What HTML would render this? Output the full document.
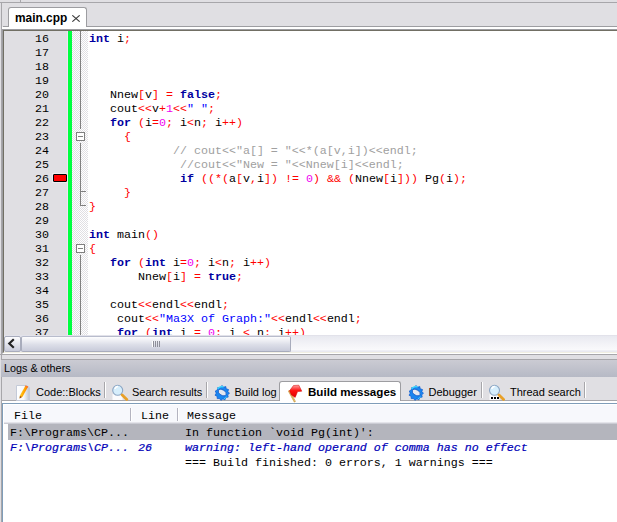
<!DOCTYPE html>
<html><head><meta charset="utf-8">
<style>
*{margin:0;padding:0;box-sizing:border-box}
html,body{width:617px;height:522px;overflow:hidden;background:#e0dfe3;position:relative}
.a{position:absolute}
.m{font-family:"Liberation Mono",monospace;font-size:11.67px;white-space:pre;line-height:14px}
.s{font-family:"Liberation Sans",sans-serif;font-size:11px;white-space:pre;color:#000}
.k{color:#0000a0;font-weight:bold}
.o{color:#ff0000}
.n{color:#f000f0}
.q{color:#0000ff}
.cl.c{color:#a0a0a0}
.ln{position:absolute;margin-top:1px;left:4px;width:45px;text-align:right;color:#000}
.cl{position:absolute;margin-top:1px;left:89px;color:#000}
.tl{position:absolute;top:386px;height:12px;font-family:"Liberation Sans",sans-serif;font-size:11px;line-height:12px;white-space:pre;color:#000}
.sep{position:absolute;top:382px;width:1px;height:16px;background:#a7a6aa;box-shadow:1px 0 0 #fff}
</style></head><body>

<!-- top strip -->
<div class="a" style="left:0;top:2px;width:617px;height:1px;background:#a7a6aa"></div>
<div class="a" style="left:20px;top:0;width:1px;height:2px;background:#a7a6aa"></div>

<!-- tab bar bottom line -->
<div class="a" style="left:3px;top:26px;width:614px;height:1px;background:#9d9da1"></div>
<div class="a" style="left:2px;top:27px;width:615px;height:2px;background:#fff"></div>
<!-- main.cpp tab -->
<div class="a" style="left:8px;top:7px;width:79px;height:20px;background:#fff;border:1px solid #9d9da1;border-bottom:none;border-radius:3px 3px 0 0"></div>
<div class="a s" style="left:15px;top:12px;font-weight:bold;font-size:11.9px;line-height:12px">main.cpp</div>
<svg class="a" style="left:72px;top:15px" width="8" height="7" viewBox="0 0 8 7"><path d="M0.3 0.3L7.7 6.7M7.7 0.3L0.3 6.7" stroke="#3a3a3a" stroke-width="1.1"/></svg>

<!-- editor frame -->
<div class="a" style="left:2px;top:29px;width:615px;height:325px;background:#fff;border-top:1px solid #9d9da1;border-left:1px solid #9d9da1;border-bottom:1px solid #fff"></div>
<div class="a" style="left:3px;top:30px;width:614px;height:323px;border-top:1px solid #716f64;border-left:1px solid #716f64;border-bottom:1px solid #f1efe2"></div>

<!-- gutter -->
<div class="a" style="left:4px;top:31px;width:63px;height:305px;background:#e0dfe3"></div>
<div class="a" style="left:67px;top:31px;width:1px;height:305px;background:#f2e2f2"></div>
<div class="a" style="left:68px;top:31px;width:4px;height:305px;background:#00ff40"></div>
<div class="a" style="left:72px;top:31px;width:16px;height:305px;background-color:#fff;background-image:conic-gradient(#e0dfe3 25%,#fff 0 50%,#e0dfe3 0 75%,#fff 0);background-size:2px 2px"></div>

<!-- fold lines -->
<div class="a" style="left:80px;top:31px;width:1px;height:98px;background:#808080"></div>
<div class="a" style="left:76px;top:132px;width:9px;height:9px;background:#fff;border:1px solid #808080"></div>
<div class="a" style="left:78px;top:136px;width:5px;height:1px;background:#808080"></div>
<div class="a" style="left:80px;top:143px;width:1px;height:63px;background:#808080"></div>
<div class="a" style="left:80px;top:191px;width:6px;height:1px;background:#808080"></div>
<div class="a" style="left:80px;top:205px;width:6px;height:1px;background:#808080"></div>
<div class="a" style="left:76px;top:244px;width:9px;height:9px;background:#fff;border:1px solid #808080"></div>
<div class="a" style="left:78px;top:248px;width:5px;height:1px;background:#808080"></div>
<div class="a" style="left:80px;top:255px;width:1px;height:81px;background:#808080"></div>

<!-- breakpoint / error marker -->
<div class="a" style="left:52px;top:173px;width:16px;height:10px;background:#ececf0"></div>
<div class="a" style="left:53px;top:174px;width:14px;height:8px;background:#ff0000;border:1px solid #000;border-radius:1px"></div>

<!-- line numbers -->
<div class="m">
<div class="ln" style="top:31px">16</div>
<div class="ln" style="top:45px">17</div>
<div class="ln" style="top:59px">18</div>
<div class="ln" style="top:73px">19</div>
<div class="ln" style="top:87px">20</div>
<div class="ln" style="top:101px">21</div>
<div class="ln" style="top:115px">22</div>
<div class="ln" style="top:129px">23</div>
<div class="ln" style="top:143px">24</div>
<div class="ln" style="top:157px">25</div>
<div class="ln" style="top:171px">26</div>
<div class="ln" style="top:185px">27</div>
<div class="ln" style="top:199px">28</div>
<div class="ln" style="top:213px">29</div>
<div class="ln" style="top:227px">30</div>
<div class="ln" style="top:241px">31</div>
<div class="ln" style="top:255px">32</div>
<div class="ln" style="top:269px">33</div>
<div class="ln" style="top:283px">34</div>
<div class="ln" style="top:297px">35</div>
<div class="ln" style="top:311px">36</div>
<div class="ln" style="top:325px">37</div>

<div class="cl" style="top:31px"><span class="k">int</span> i<span class="o">;</span></div>
<div class="cl" style="top:87px">   Nnew<span class="o">[</span>v<span class="o">]</span> <span class="o">=</span> <span class="k">false</span><span class="o">;</span></div>
<div class="cl" style="top:101px">   cout<span class="o">&lt;&lt;</span>v<span class="o">+</span><span class="n">1</span><span class="o">&lt;&lt;</span><span class="q">" "</span><span class="o">;</span></div>
<div class="cl" style="top:115px">   <span class="k">for</span> <span class="o">(</span>i<span class="o">=</span><span class="n">0</span><span class="o">;</span> i<span class="o">&lt;</span>n<span class="o">;</span> i<span class="o">++)</span></div>
<div class="cl" style="top:129px">     <span class="o">{</span></div>
<div class="cl c" style="top:143px">            // cout&lt;&lt;"a[] = "&lt;&lt;*(a[v,i])&lt;&lt;endl;</div>
<div class="cl c" style="top:157px">             //cout&lt;&lt;"New = "&lt;&lt;Nnew[i]&lt;&lt;endl;</div>
<div class="cl" style="top:171px">             <span class="k">if</span> <span class="o">((*(</span>a<span class="o">[</span>v<span class="o">,</span>i<span class="o">])</span> <span class="o">!=</span> <span class="n">0</span><span class="o">)</span> <span class="o">&amp;&amp;</span> <span class="o">(</span>Nnew<span class="o">[</span>i<span class="o">]))</span> Pg<span class="o">(</span>i<span class="o">);</span></div>
<div class="cl" style="top:185px">     <span class="o">}</span></div>
<div class="cl" style="top:199px"><span class="o">}</span></div>
<div class="cl" style="top:227px"><span class="k">int</span> main<span class="o">()</span></div>
<div class="cl" style="top:241px"><span class="o">{</span></div>
<div class="cl" style="top:255px">   <span class="k">for</span> <span class="o">(</span><span class="k">int</span> i<span class="o">=</span><span class="n">0</span><span class="o">;</span> i<span class="o">&lt;</span>n<span class="o">;</span> i<span class="o">++)</span></div>
<div class="cl" style="top:269px">       Nnew<span class="o">[</span>i<span class="o">]</span> <span class="o">=</span> <span class="k">true</span><span class="o">;</span></div>
<div class="cl" style="top:297px">   cout<span class="o">&lt;&lt;</span>endl<span class="o">&lt;&lt;</span>endl<span class="o">;</span></div>
<div class="cl" style="top:311px">    cout<span class="o">&lt;&lt;</span><span class="q">"Ma3X of Graph:"</span><span class="o">&lt;&lt;</span>endl<span class="o">&lt;&lt;</span>endl<span class="o">;</span></div>
<div class="cl" style="top:325px">    <span class="k">for</span> <span class="o">(</span><span class="k">int</span> i <span class="o">=</span> <span class="n">0</span><span class="o">;</span> i <span class="o">&lt;</span> n<span class="o">;</span> i<span class="o">++)</span></div>
</div>

<!-- horizontal scrollbar -->
<div class="a" style="left:4px;top:335px;width:613px;height:17px;background:linear-gradient(#e8e9f0,#f3f3f7 50%,#f9f9fb 85%,#e9e9f0 94%);border-top:1px solid #e2e2ea"></div>
<div class="a" style="left:4px;top:336px;width:17px;height:16px;border:1px solid #a8acbc;border-radius:2px;background:linear-gradient(#fdfdfe,#c8cbda)"></div>
<svg class="a" style="left:7px;top:338px" width="10" height="12" viewBox="0 0 10 12"><path d="M6.8 1.2L2.3 5.5L6.8 9.8" fill="none" stroke="#222" stroke-width="2.2"/></svg>
<div class="a" style="left:21px;top:336px;width:270px;height:16px;border:1px solid #a8acbc;border-top-color:#b8bccc;border-radius:2px;background:linear-gradient(#fdfdfe,#dcdee8 55%,#c8cbda)"></div>
<div class="a" style="left:153px;top:341px;width:1px;height:6px;background:#8e8f99;box-shadow:2px 0 0 #8e8f99,4px 0 0 #8e8f99,6px 0 0 #8e8f99,-1px 0 0 #fff"></div>

<!-- sash -->
<div class="a" style="left:0;top:354px;width:617px;height:1px;background:#a7a6aa"></div>
<div class="a" style="left:1px;top:3px;width:1px;height:519px;background:#a7a6aa"></div>

<!-- Logs & others header -->
<div class="a" style="left:1px;top:359px;width:616px;height:18px;border-top:1px solid #a7a6aa;background:linear-gradient(#cbcbd3,#b6b9c5)"></div>
<div class="a s" style="left:4px;top:362px;line-height:13px;font-size:10.8px">Logs &amp; others</div>

<!-- bottom tabs -->
<div class="a" style="left:2px;top:400px;width:615px;height:1px;background:#a7a6aa"></div>
<div class="a" style="left:2px;top:401px;width:615px;height:2px;background:#fff"></div>
<div class="sep" style="left:104px"></div>
<div class="sep" style="left:206px"></div>
<div class="sep" style="left:481px"></div>
<div class="sep" style="left:584px"></div>
<div class="a" style="left:279px;top:381px;width:122px;height:20px;background:#fff;border:1px solid #9d9da1;border-bottom:none;border-radius:3px 3px 0 0"></div>

<!-- tab icons -->
<svg class="a" style="left:16px;top:385px" width="14" height="16" viewBox="0 0 14 16">
 <defs><linearGradient id="pg" x1="0" x2="1"><stop offset="0" stop-color="#fff"/><stop offset="0.55" stop-color="#f6f8fb"/><stop offset="1" stop-color="#bcc2d0"/></linearGradient>
 <linearGradient id="pc" x1="0" y1="0.3" x2="1" y2="0.7"><stop offset="0" stop-color="#ffe040"/><stop offset="0.5" stop-color="#ffa800"/><stop offset="1" stop-color="#ff5000"/></linearGradient></defs>
 <path d="M0.5 0.5h10.5l2.5 2.5v12.5h-13z" fill="url(#pg)" stroke="#c4cad8"/>
 <path d="M3.6 13.6L3.9 10.6 9.6 0.4 12.2 1.6 6.5 11.8z" fill="url(#pc)"/>
 <path d="M9.6 0.4L12.2 1.6 11.6 2.8 9 1.6z" fill="#ff7030"/>
 <path d="M3.6 13.6L3.9 11 5.9 12.1z" fill="#904020"/>
</svg>
<div class="tl" style="left:36px">Code::Blocks</div>

<svg class="a" style="left:111px;top:384px" width="18" height="17" viewBox="0 0 18 17">
 <rect x="1.5" y="10" width="10" height="6" fill="#fbfbfd"/>
 <circle cx="6.7" cy="6.3" r="5" fill="#d6eefc" stroke="#8ca6c4" stroke-width="1.1"/>
 <path d="M4 5a3 3 0 0 1 3-2.5" stroke="#fff" stroke-width="1.5" fill="none"/>
 <path d="M11.2 11l4.6 4.4" stroke="#e8a028" stroke-width="2.8" stroke-linecap="round"/>
</svg>
<div class="tl" style="left:132px">Search results</div>

<svg class="a" style="left:213.5px;top:384.5px" width="16" height="16" viewBox="0 0 16 16">
 <g transform="translate(8 8)">
 <path d="M0-7.5L1.6-5.8 3.8-6.5 4.2-4.2 6.5-3.5 5.9-1.3 7.5 0.3 5.7 1.8 6.2 4.1 3.9 4.5 3 6.8 0.9 5.9-1.1 7.3-2.5 5.5-4.8 5.6-4.9 3.3-7 2.2-5.8 0.2-6.7-2 -4.6-3.1-4.3-5.4-2-5.4z" fill="#1a86f0" stroke="#0a58d0" stroke-width="0.7"/>
 <ellipse cx="0" cy="-0.5" rx="4.3" ry="2.7" transform="rotate(28)" fill="#e4e8f0" stroke="#0a50c0" stroke-width="0.7"/><path d="M-4.5-4.2a6 6 0 0 1 6-2" stroke="#40e0ff" stroke-width="1.2" fill="none"/><path d="M4.8 3.5a6 6 0 0 1-3 2.5" stroke="#40d0ff" stroke-width="1" fill="none"/>
 </g>
</svg>
<div class="tl" style="left:234.5px">Build log</div>

<svg class="a" style="left:284px;top:382px" width="22" height="22" viewBox="0 0 22 22">
 <defs><linearGradient id="fl" x1="0" y1="0" x2="0" y2="1"><stop offset="0" stop-color="#ffa0a0"/><stop offset="0.45" stop-color="#ff1010"/><stop offset="1" stop-color="#e00000"/></linearGradient></defs>
 <path d="M4.8 8.6L11 20" stroke="#d0a048" stroke-width="2"/>
 <path d="M4.8 8.6L11 20" stroke="#f4dca0" stroke-width="1" stroke-dasharray="1 1.2"/>
 <path d="M5.5 8.8L9.5 3.5 14.8 3.2 17.8 9.2 13.6 9.6 11.2 15.4 7.4 13z" fill="url(#fl)" stroke="#d00000" stroke-width="0.5"/>
</svg>
<div class="tl" style="left:308px;font-weight:bold;font-size:11.6px">Build messages</div>

<svg class="a" style="left:407.5px;top:384.5px" width="16" height="16" viewBox="0 0 16 16">
 <g transform="translate(8 8)">
 <path d="M0-7.5L1.6-5.8 3.8-6.5 4.2-4.2 6.5-3.5 5.9-1.3 7.5 0.3 5.7 1.8 6.2 4.1 3.9 4.5 3 6.8 0.9 5.9-1.1 7.3-2.5 5.5-4.8 5.6-4.9 3.3-7 2.2-5.8 0.2-6.7-2 -4.6-3.1-4.3-5.4-2-5.4z" fill="#1a86f0" stroke="#0a58d0" stroke-width="0.7"/>
 <ellipse cx="0" cy="-0.5" rx="4.3" ry="2.7" transform="rotate(28)" fill="#e4e8f0" stroke="#0a50c0" stroke-width="0.7"/><path d="M-4.5-4.2a6 6 0 0 1 6-2" stroke="#40e0ff" stroke-width="1.2" fill="none"/><path d="M4.8 3.5a6 6 0 0 1-3 2.5" stroke="#40d0ff" stroke-width="1" fill="none"/>
 </g>
</svg>
<div class="tl" style="left:428.5px">Debugger</div>

<svg class="a" style="left:488px;top:384px" width="18" height="17" viewBox="0 0 18 17">
 <rect x="1.5" y="10" width="10" height="6" fill="#fbfbfd"/>
 <circle cx="6.5" cy="6.3" r="5" fill="#d6eefc" stroke="#8ca6c4" stroke-width="1.1"/>
 <path d="M3.8 5a3 3 0 0 1 3-2.5" stroke="#fff" stroke-width="1.5" fill="none"/>
 <path d="M11 11l4.6 4.4" stroke="#e8a028" stroke-width="2.8" stroke-linecap="round"/>
 <rect x="3" y="13" width="2" height="2" fill="#000"/><rect x="6" y="13" width="2" height="2" fill="#000"/><rect x="9" y="13" width="2" height="2" fill="#000"/>
</svg>
<div class="tl" style="left:510px">Thread search</div>

<!-- list -->
<div class="a" style="left:2px;top:403px;width:615px;height:119px;background:#fff;border-top:1px solid #7f9db9;border-left:1px solid #7f9db9"></div>
<div class="a" style="left:4px;top:404px;width:613px;height:20px;background:linear-gradient(#fff 0 1px,#f7f8fc 1px 18px,#e4e4ea 18px 19px,#cbccd4 19px)"></div>
<div class="a" style="left:130px;top:408px;width:1px;height:13px;background:#b4b4c0;box-shadow:1px 0 0 #fff"></div>
<div class="a" style="left:177px;top:408px;width:1px;height:13px;background:#b4b4c0;box-shadow:1px 0 0 #fff"></div>
<div class="m">
<div class="a" style="left:14px;top:409px">File</div>
<div class="a" style="left:141px;top:409px">Line</div>
<div class="a" style="left:187px;top:409px">Message</div>
</div>
<div class="a" style="left:8px;top:424px;width:609px;height:16px;background:#b4b5bd"></div>
<div class="m">
<div class="a" style="left:10px;top:426px">F:\Programs\CP...</div>
<div class="a" style="left:185px;top:426px">In function `void Pg(int)':</div>
<div class="a" style="left:10px;top:441px;color:#0000b8;font-style:italic;-webkit-text-stroke:0.2px currentColor">F:\Programs\CP...</div>
<div class="a" style="left:138px;top:441px;color:#0000b8;font-style:italic;-webkit-text-stroke:0.2px currentColor">26</div>
<div class="a" style="left:185px;top:441px;color:#0000b8;font-style:italic;-webkit-text-stroke:0.2px currentColor">warning: left-hand operand of comma has no effect</div>
<div class="a" style="left:185px;top:456px">=== Build finished: 0 errors, 1 warnings ===</div>
</div>

</body></html>
